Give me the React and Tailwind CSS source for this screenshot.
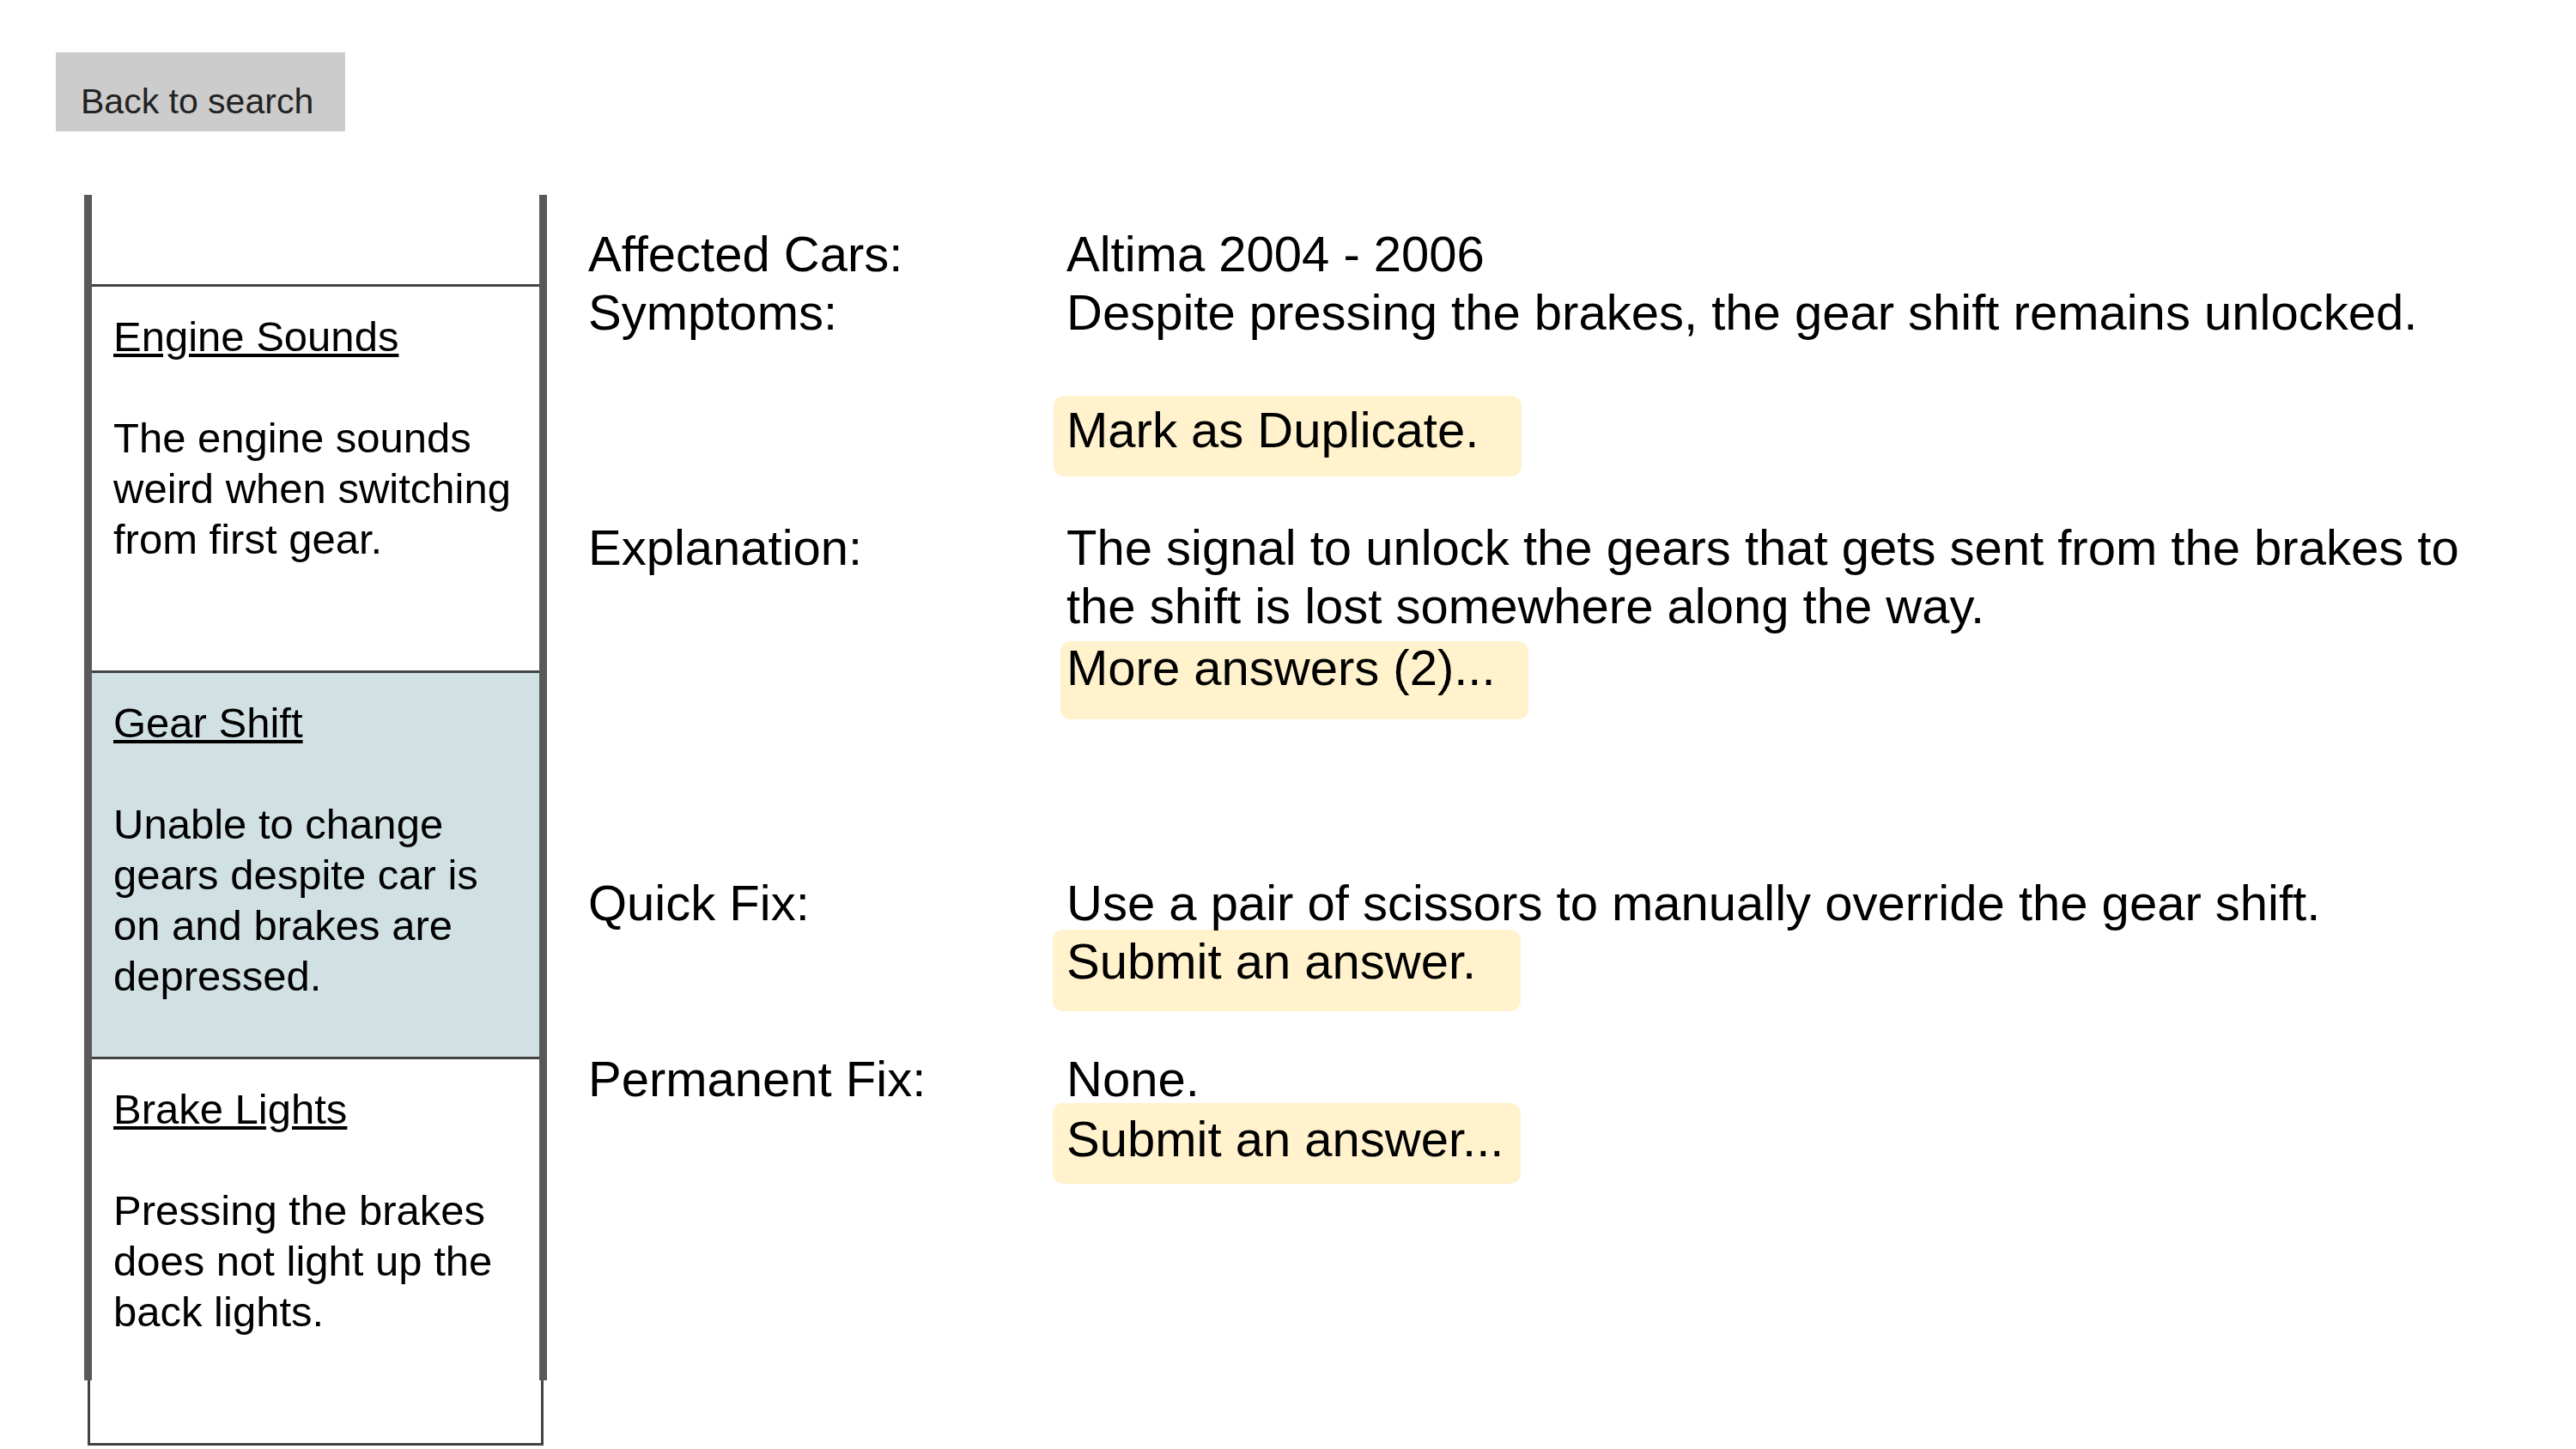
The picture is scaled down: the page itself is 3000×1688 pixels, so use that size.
import React from 'react';

const issues = [
    { title: 'Engine Sounds', text: 'The engine sounds weird when switching from first gear.' },
    { title: 'Gear Shift', text: 'Unable to change gears despite car is on and brakes are depressed.', active: true },
    { title: 'Brake Lights', text: 'Pressing the brakes does not light up the back lights.' },
];

const IssueCard = ({ title, text, active }) => (
    <div
        className={`h-[450px] border-x-[3px] border-b-[3px] border-[#434343] pt-[29px] pl-[27px] pr-[20px] text-[49px] leading-[59px] text-black ${active ? 'bg-[#d0e0e3]' : 'bg-white'}`}
    >
        <div className="underline">{title}</div>
        <div className="h-[59px]" />
        <div>{text}</div>
    </div>
);

const Pill = ({ children, className }) => (
    <div className={`w-[545px] rounded-[12px] bg-[#fff2cc] text-[58px] text-black ${className}`}>
        {children}
    </div>
);

const Row = ({ label, children, className = '' }) => (
    <div className={`flex ${className}`}>
        <div className="w-[557px] shrink-0 leading-[68px]">{label}</div>
        <div className="w-[1680px] leading-[68px]">{children}</div>
    </div>
);

export default function App() {
    return (
        <div
            className="min-h-screen w-full bg-white pl-[65px] pt-[61px] text-black"
            style={{ fontFamily: '"Liberation Sans", Arial, Helvetica, sans-serif' }}
        >
            <button className="block h-[92px] w-[337px] bg-[#cccccc] pl-[29px] pt-[21px] text-left text-[41px] leading-[48px] text-[#222222]">
                Back to search
            </button>

            <div className="mt-[74px] flex items-start">
                {/* issue list */}
                <div className="relative ml-[37px] w-[531px] shrink-0">
                    <div className="h-[107px] border-x-[3px] border-b-[3px] border-[#434343]" />
                    {issues.map((it) => (
                        <IssueCard key={it.title} {...it} />
                    ))}
                    <div className="absolute left-[-4px] top-0 h-[1381px] w-[9px] bg-[#595959]" />
                    <div className="absolute right-[-4px] top-0 h-[1381px] w-[9px] bg-[#595959]" />
                </div>

                {/* details */}
                <div className="ml-[52px] mt-[35px] text-[58px]">
                    <Row label="Affected Cars:">Altima 2004 - 2006</Row>
                    <Row label="Symptoms:">Despite pressing the brakes, the gear shift remains unlocked.</Row>
                    <Row label="" className="mt-[63px]">
                        <Pill className="ml-[-15px] h-[94px] pl-[15px] pt-[6px] leading-[68px]">Mark as Duplicate.</Pill>
                    </Row>
                    <Row label="Explanation:" className="mt-[49px]">
                        <div>The signal to unlock the gears that gets sent from the brakes to the shift is lost somewhere along the way.</div>
                        <Pill className="ml-[-7px] mt-[7px] h-[91px] pl-[7px] leading-[62px]">More answers (2)...</Pill>
                    </Row>
                    <Row label="Quick Fix:" className="mt-[180px]">
                        <div>Use a pair of scissors to manually override the gear shift.</div>
                        <Pill className="ml-[-16px] mt-[-3px] h-[95px] pl-[16px] pt-[3px] leading-[68px]">Submit an answer.</Pill>
                    </Row>
                    <Row label="Permanent Fix:" className="mt-[45px]">
                        <div>None.</div>
                        <Pill className="ml-[-16px] mt-[-6px] h-[94px] pl-[16px] pt-[8px] leading-[68px]">Submit an answer...</Pill>
                    </Row>
                </div>
            </div>
        </div>
    );
}
